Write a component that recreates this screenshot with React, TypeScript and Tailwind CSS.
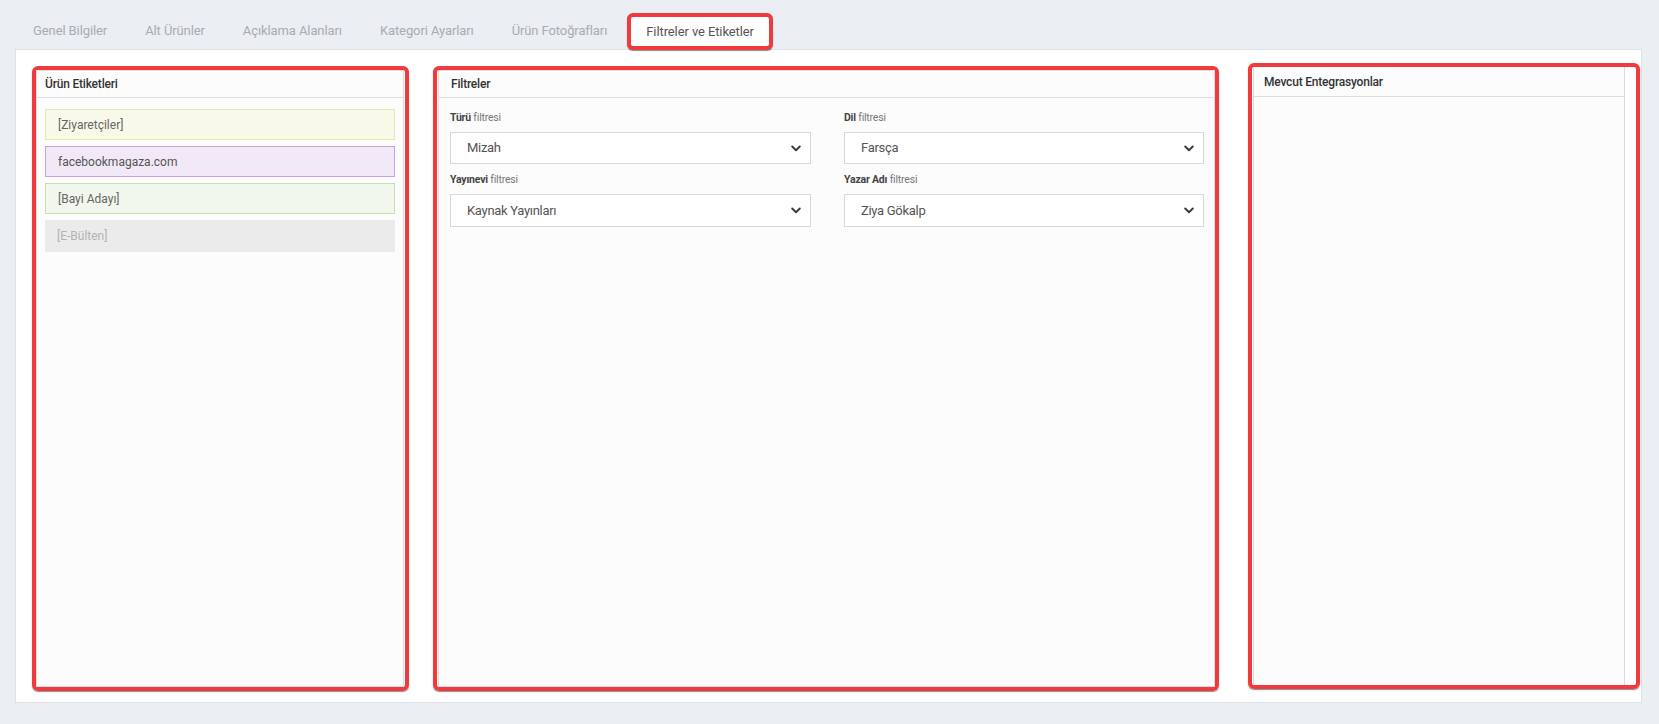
import React from "react";

const tabs = [
  "Genel Bilgiler",
  "Alt Ürünler",
  "Açıklama Alanları",
  "Kategori Ayarları",
  "Ürün Fotoğrafları",
];

function Chevron() {
  return (
    <svg width="10" height="7" viewBox="0 0 10 7" fill="none">
      <path d="M1.2 1.5L5 5.2L8.8 1.5" stroke="#3a3a3a" strokeWidth="1.9" strokeLinecap="round" strokeLinejoin="round" />
    </svg>
  );
}

function Select({ value, h }: { value: string; h: string }) {
  return (
    <div className={`${h} w-full border border-[#d5d8dd] bg-white flex items-center justify-between pl-[16px] pr-[9px]`}>
      <span className="text-[13px] tracking-[-0.3px] text-[#555]">{value}</span>
      <Chevron />
    </div>
  );
}

function Field({ bold, value, h }: { bold: string; value: string; h: string }) {
  return (
    <div>
      <div className="text-[10.5px] leading-[14px] mb-[7px] tracking-[-0.2px]">
        <span className="font-bold text-[#444]">{bold}</span>
        <span className="text-[#777]"> filtresi</span>
      </div>
      <Select value={value} h={h} />
    </div>
  );
}

export default function App() {
  return (
    <div className="min-h-[724px] bg-[#ebeef3] font-['Roboto',sans-serif]">
      <div className="h-[49px] flex items-end pl-[14px]">
        {tabs.map((t) => (
          <div key={t} className="h-[37px] px-[19px] flex items-center text-[13px] tracking-[-0.1px] text-[#a8acb1]">
            {t}
          </div>
        ))}
        <div className="relative z-10 -mb-px h-[37px] px-[15px] ml-[1px] flex items-center text-[13px] tracking-[-0.1px] text-[#555] bg-white border-4 border-[#ef3a3e] rounded-[6px] shadow-[0_1px_1px_rgba(0,0,0,0.45)]">
          Filtreler ve Etiketler
        </div>
      </div>

      <div className="ml-[15px] w-[1627px] h-[654px] bg-white border border-[#dde0e5] flex items-start pl-[16px]">
        {/* Left column */}
        <div className="mt-[16px] w-[377px] h-[625px] border-4 border-[#ef3a3e] rounded-[6px] shadow-[0_1px_1px_rgba(0,0,0,0.45)] flex">
          <div className="flex-1 mr-[1px] border border-[#dcdcdc] bg-[#fcfcfc] flex flex-col">
            <div className="h-[27px] border-b border-[#dcdcdc] flex items-center pl-[8px] text-[12px] tracking-[-0.2px] font-medium text-[#333]">
              Ürün Etiketleri
            </div>
            <div className="px-[8px] pt-[11px] flex flex-col gap-[6px]">
              <div className="h-[31px] bg-[#f9f9ea] border border-[#e9e7a9] flex items-center pl-[12px] text-[12px] text-[#666]">
                [Ziyaretçiler]
              </div>
              <div className="h-[31px] bg-[#f1e9f8] border border-[#c9a2e8] flex items-center pl-[12px] text-[12px] text-[#555]">
                facebookmagaza.com
              </div>
              <div className="h-[31px] bg-[#f1f7ec] border border-[#c6e1aa] flex items-center pl-[12px] text-[12px] text-[#666]">
                [Bayi Adayı]
              </div>
              <div className="h-[32px] bg-[#ebebeb] flex items-center pl-[12px] text-[12px] text-[#b3b3b3]">
                [E-Bülten]
              </div>
            </div>
          </div>
        </div>

        {/* Middle column */}
        <div className="mt-[16px] ml-[24px] w-[786px] h-[625px] border-4 border-[#ef3a3e] rounded-[6px] shadow-[0_1px_1px_rgba(0,0,0,0.45)] flex">
          <div className="flex-1 ml-[1px] border border-[#dcdcdc] bg-[#fcfcfc] flex flex-col">
            <div className="h-[27px] border-b border-[#dcdcdc] flex items-center pl-[12px] text-[12px] tracking-[-0.2px] font-medium text-[#333]">
              Filtreler
            </div>
            <div className="pl-[11px] pr-[8px] pt-[13px] grid grid-cols-[361px_360px] gap-x-[33px] gap-y-[9px]">
              <Field bold="Türü" value="Mizah" h="h-[32px]" />
              <Field bold="Dil" value="Farsça" h="h-[32px]" />
              <Field bold="Yayınevi" value="Kaynak Yayınları" h="h-[33px]" />
              <Field bold="Yazar Adı" value="Ziya Gökalp" h="h-[33px]" />
            </div>
          </div>
        </div>

        {/* Right column */}
        <div className="mt-[13px] ml-[29px] w-[392px] h-[626px] border-4 border-[#ef3a3e] rounded-[6px] shadow-[0_1px_1px_rgba(0,0,0,0.45)] flex">
          <div className="flex-1 ml-[1px] mr-[11px] border-l border-r border-[#dcdcdc] bg-[#fcfcfc] flex flex-col">
            <div className="h-[30px] border-b border-[#dcdcdc] flex items-center pl-[10px] text-[12px] tracking-[-0.2px] font-medium text-[#333]">
              Mevcut Entegrasyonlar
            </div>
          </div>
        </div>
      </div>
    </div>
  );
}
